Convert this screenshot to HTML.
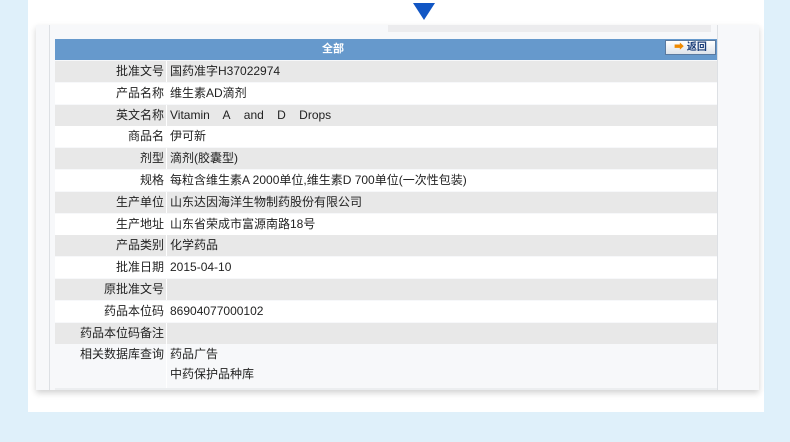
<!DOCTYPE html><html><head><meta charset="utf-8"><style>
body{margin:0;width:790px;height:442px;background:#dff0fa;position:relative;overflow:hidden;font-family:"Liberation Sans","Noto Sans CJK SC",sans-serif;font-size:12px;color:#222}
.panel{position:absolute;left:28px;top:0;width:736px;height:412px;background:#fff}
.tri{position:absolute;left:413px;top:3px;width:0;height:0;border-left:11px solid transparent;border-right:11px solid transparent;border-top:17px solid #1156c4}
.card{position:absolute;left:36px;top:25px;width:723px;height:365px;background:#f7f8fa;box-shadow:0 3px 6px rgba(0,0,0,.18)}
.vl{position:absolute;top:25px;height:365px;width:1px;background:#dde0e4}
.bar{position:absolute;left:388px;top:25px;width:323px;height:7px;background:#ececee}
.hd{position:absolute;left:55px;top:39px;width:662px;height:21px;background:#6699cc;color:#fff;line-height:21px;font-weight:bold;font-size:11px}
.hd span{position:absolute;left:267px}
.btn{position:absolute;left:665px;top:40px;width:51px;height:15px;background:linear-gradient(#fff,#dde3ea);border:1px solid #5a7aa0;box-sizing:border-box;font-size:10px;font-weight:bold;color:#1a3d7a;line-height:13px;text-align:center}
.btn b{color:#f08a00}
.row{position:absolute;left:55px;width:662px;height:21px;display:flex}
.row .l{width:112px;text-align:right;line-height:21px;border-right:1px solid #fff;box-sizing:border-box;padding-right:2px}
.row .v{padding-left:3px;line-height:21px}
.g{background:#e8e8e8}.w{background:#fff}
</style></head><body>
<div class="panel"></div>
<div class="tri"></div>
<div class="card"></div>
<div class="vl" style="left:49px"></div>
<div class="vl" style="left:717px"></div>
<div class="bar"></div>
<div class="hd"><span>全部</span></div>
<div class="btn"><b>➡</b> 返回</div>
<div class="row g" style="top:61px"><div class="l">批准文号</div><div class="v">国药准字H37022974</div></div>
<div class="row w" style="top:82.8px"><div class="l">产品名称</div><div class="v">维生素AD滴剂</div></div>
<div class="row g" style="top:104.6px"><div class="l">英文名称</div><div class="v">Vitamin&nbsp;&nbsp;&nbsp; A&nbsp;&nbsp;&nbsp; and&nbsp;&nbsp;&nbsp; D&nbsp;&nbsp;&nbsp; Drops</div></div>
<div class="row w" style="top:126.4px"><div class="l">商品名</div><div class="v">伊可新</div></div>
<div class="row g" style="top:148.2px"><div class="l">剂型</div><div class="v">滴剂(胶囊型)</div></div>
<div class="row w" style="top:170px"><div class="l">规格</div><div class="v">每粒含维生素A 2000单位,维生素D 700单位(一次性包装)</div></div>
<div class="row g" style="top:191.8px"><div class="l">生产单位</div><div class="v">山东达因海洋生物制药股份有限公司</div></div>
<div class="row w" style="top:213.6px"><div class="l">生产地址</div><div class="v">山东省荣成市富源南路18号</div></div>
<div class="row g" style="top:235.4px"><div class="l">产品类别</div><div class="v">化学药品</div></div>
<div class="row w" style="top:257.2px"><div class="l">批准日期</div><div class="v">2015-04-10</div></div>
<div class="row g" style="top:279px"><div class="l">原批准文号</div><div class="v"></div></div>
<div class="row w" style="top:300.8px"><div class="l">药品本位码</div><div class="v">86904077000102</div></div>
<div class="row g" style="top:322.6px"><div class="l">药品本位码备注</div><div class="v"></div></div>
<div class="row" style="top:344px;height:44px;background:#f7f8fa"><div class="l" style="line-height:21px;height:44px">相关数据库查询</div><div class="v" style="line-height:21px">药品广告<br><span style="position:relative;top:-1px">中药保护品种库</span></div></div>
<div class="row g" style="top:388px;height:2px;background:#eceef0"></div>
</body></html>
